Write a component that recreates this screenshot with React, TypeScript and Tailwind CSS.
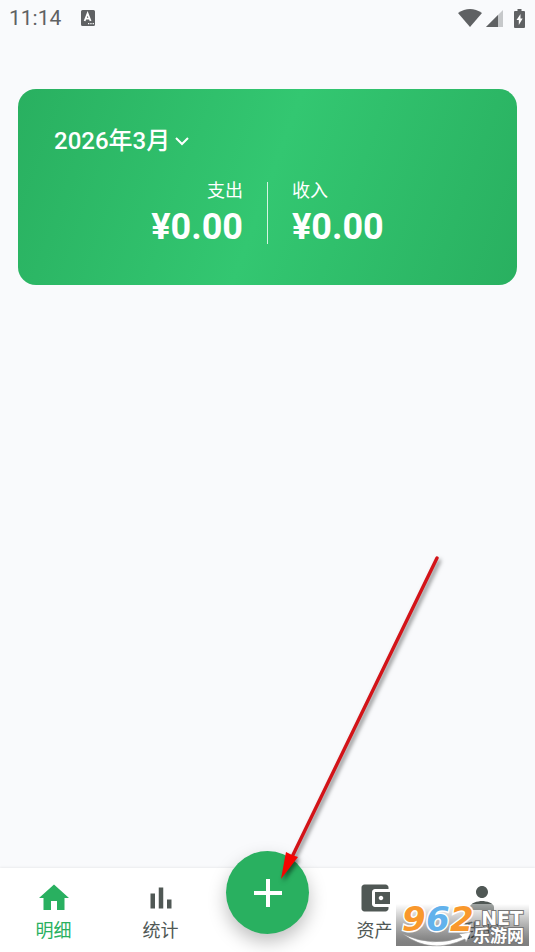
import type { ReactNode } from 'react';

const cjk = "font-[Roboto,'Noto_Sans_CJK_SC',sans-serif]";

function StatusBar() {
  return (
    <div className="flex h-9 items-center pr-[10px] pl-[9px] text-[#5f6163]">
      <span className="text-[21px] leading-6">11:14</span>
      <svg className="ml-5 h-4 w-[14px]" viewBox="0 0 14 16" aria-hidden="true">
        <path fill="currentColor" d="M1.5 0h11A1.5 1.5 0 0 1 14 1.5v13a1.5 1.5 0 0 1-1.5 1.5h-11A1.500 1.500 0 0 1 0 14.500v-13A1.500 1.500 0 0 1 1.500 0Z" />
        <path fill="none" stroke="#fff" strokeWidth="1.8" d="M3.600 11 6.600 3.500 9.600 11M4.600 8.600h4" />
        <path fill="#fff" d="M7 13h1.300v1.300H7zM9.300 13h1.300v1.300H9.300zM11.600 13h1.300v1.300h-1.300z" />
      </svg>
      <svg className="ml-auto h-[18px] w-6" viewBox="0 0 24 18" aria-hidden="true">
        <path fill="currentColor" d="M0 4Q12-4 24 4L12 18Z" />
      </svg>
      <svg className="ml-1 size-[17px]" viewBox="0 0 17 17" aria-hidden="true">
        <path fill="#c6c8ca" d="M17 0v17H0Z" />
        <path fill="currentColor" d="M12 5v12H0Z" />
      </svg>
      <svg className="ml-[11px] h-[19px] w-[11px]" viewBox="0 0 11 19" aria-hidden="true">
        <path fill="currentColor" d="M3.500 0h4v2H10a1 1 0 0 1 1 1v15a1 1 0 0 1-1 1H1a1 1 0 0 1-1-1V3a1 1 0 0 1 1-1h2.500Z" />
        <path fill="#fff" d="M6.500 5 2.500 11h2.300v5L8.700 9.500H6.500Z" />
      </svg>
    </div>
  );
}

function Amount({ label, value, right }: { label: string; value: string; right?: boolean }) {
  return (
    <div className={right ? 'flex-1 text-right' : 'flex-1'}>
      <div className="text-lg leading-5">{label}</div>
      <div className="mt-2 text-4xl leading-9 font-bold">{value}</div>
    </div>
  );
}

function Tab({ label, active, children }: { label: string; active?: boolean; children: ReactNode }) {
  return (
    <button
      type="button"
      className={`flex flex-1 flex-col items-center pt-3 ${active ? 'text-[#29b060]' : 'text-[#505855]'}`}
    >
      <svg className="size-9" viewBox="0 0 24 24" fill="currentColor" aria-hidden="true">
        {children}
      </svg>
      <span className="text-lg leading-[30px]">{label}</span>
    </button>
  );
}

function Watermark() {
  return (
    <div className="pointer-events-none absolute right-[6px] bottom-[6px] h-[42px] w-[133px] bg-linear-to-b from-[#ffffff73] to-[#00000080]">
      <svg className="block h-full w-full overflow-visible" viewBox="0 0 133 42" aria-hidden="true">
        <path d="M7 30Q36 44 66 33L63 30 75 28 70 38 69 35Q35 51 7 30Z" fill="#fff" stroke="#999" strokeWidth="0.600" />
        <g fontFamily="DejaVu Sans, sans-serif" fontWeight="bold" fontStyle="italic" fontSize="34" stroke="#fff" strokeWidth="3" paintOrder="stroke">
          <text x="6" y="27" fill="#f9982c">9</text>
          <text x="30" y="27" fill="#62b2ec">6</text>
          <text x="54" y="27" fill="#f9982c">2</text>
        </g>
        <g fill="#fff" stroke="#777" strokeWidth="2" paintOrder="stroke">
          <text x="78" y="21" fontFamily="DejaVu Sans, sans-serif" fontWeight="bold" fontSize="19">.NET</text>
          <text x="77" y="38" fontFamily="Noto Sans CJK SC, sans-serif" fontWeight="bold" fontSize="17">乐游网</text>
        </g>
      </svg>
    </div>
  );
}

export default function App() {
  return (
    <div className={`relative flex min-h-screen flex-col bg-[#f9fafc] ${cjk}`}>
      <StatusBar />
      <main className="flex-1 px-[18px] pt-[53px]">
        <section className="rounded-[18px] bg-[linear-gradient(110deg,#29b060_0%,#33c771_50%,#29b060_100%)] px-9 pt-9 pb-10 text-white">
          <button type="button" className="flex h-8 items-center gap-0.5 text-2xl font-medium">
            2026年3月
            <svg className="size-5" viewBox="0 0 20 20" fill="none" stroke="currentColor" strokeWidth="2" aria-hidden="true">
              <path d="m4 7 6 6 6-6" />
            </svg>
          </button>
          <div className="mt-6 flex gap-6">
            <Amount label="支出" value="¥0.00" right />
            <div className="my-px w-px bg-white/80" />
            <Amount label="收入" value="¥0.00" />
          </div>
        </section>
      </main>
      <nav className="relative flex h-[84px] bg-white shadow-[0_-1px_2px_#0000000f]">
        <Tab label="明细" active>
          <path d="M10 20v-6h4v6h5v-8h3L12 3 2 12h3v8z" />
        </Tab>
        <Tab label="统计">
          <path d="M5 9h3v10H5zM10.500 5h3v14h-3zM16 13h3v6h-3z" />
        </Tab>
        <div className="flex flex-1 justify-center">
          <button
            type="button"
            aria-label="添加"
            className="-mt-[17px] flex size-[83px] shrink-0 items-center justify-center rounded-full bg-[#29b060] text-white shadow-[0_8px_18px_#00000040]"
          >
            <svg className="size-12" viewBox="0 0 24 24" fill="currentColor" aria-hidden="true">
              <path d="M19 13h-6v6h-2v-6H5v-2h6V5h2v6h6v2z" />
            </svg>
          </button>
        </div>
        <Tab label="资产">
          <path d="M21 18v1c0 1.100-.9 2-2 2H5c-1.110 0-2-.9-2-2V5c0-1.100.89-2 2-2h14c1.100 0 2 .9 2 2v1h-9c-1.110 0-2 .9-2 2v8c0 1.100.89 2 2 2h9zm-9-2h10V8H12v8zm4-2.500c-.83 0-1.500-.67-1.500-1.500s.67-1.500 1.500-1.500 1.500.67 1.500 1.500-.67 1.500-1.500 1.500z" />
        </Tab>
        <Tab label="我的">
          <path d="M12 12c2.210 0 4-1.790 4-4s-1.790-4-4-4-4 1.790-4 4 1.790 4 4 4zm0 2c-2.670 0-8 1.340-8 4v2h16v-2c0-2.660-5.330-4-8-4z" />
        </Tab>
        <Watermark />
      </nav>
      <svg
        className="pointer-events-none absolute right-[90px] bottom-[68px] h-[330px] w-[170px] drop-shadow-[2px_3px_2px_#00000080]"
        viewBox="0 0 170 330"
        aria-hidden="true"
      >
        <path d="M162 4 17 303" stroke="#d31318" strokeWidth="3.400" strokeLinecap="round" />
        <path d="M6 325 11 298 17 301 23 303Z" fill="#f60400" />
      </svg>
    </div>
  );
}
